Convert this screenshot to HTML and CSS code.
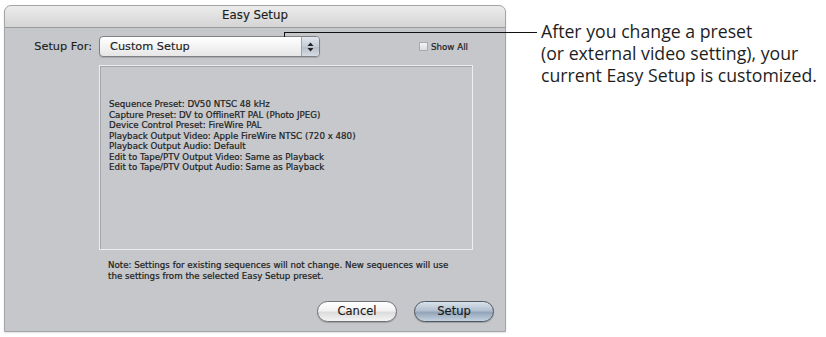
FILE: index.html
```html
<!DOCTYPE html>
<html>
<head>
<meta charset="utf-8">
<link rel="stylesheet" href="styles.css">
</head>
<body>
<div class="page">
  <div class="window">
    <div class="titlebar">Easy Setup</div>
    <div class="content">
      <div class="setup-row">
        <div class="label">Setup For:</div>
        <div class="popup">
          <span class="popup-text">Custom Setup</span>
          <span class="stepper">
            <svg width="7" height="10" viewBox="0 0 7 10"><path d="M3.5 0.5 L6.5 4 L0.5 4 Z" fill="#222"/><path d="M3.5 9.5 L6.5 6 L0.5 6 Z" fill="#222"/></svg>
          </span>
        </div>
        <div class="showall"><span class="check"></span><span>Show All</span></div>
      </div>
      <div class="group">
        <div>Sequence Preset: DV50 NTSC 48 kHz</div>
        <div>Capture Preset: DV to OfflineRT PAL (Photo JPEG)</div>
        <div>Device Control Preset: FireWire PAL</div>
        <div>Playback Output Video: Apple FireWire NTSC (720 x 480)</div>
        <div>Playback Output Audio: Default</div>
        <div>Edit to Tape/PTV Output Video: Same as Playback</div>
        <div>Edit to Tape/PTV Output Audio: Same as Playback</div>
      </div>
      <div class="note">Note: Settings for existing sequences will not change. New sequences will use<br>the settings from the selected Easy Setup preset.</div>
      <div class="buttons">
        <div class="btn">Cancel</div>
        <div class="btn default">Setup</div>
      </div>
    </div>
  </div>
  <div class="callout">After you change a preset<br>(or external video setting), your<br>current Easy Setup is customized.</div>
  <div class="leader-h"></div>
  <div class="leader-v"></div>
</div>
</body>
</html>
```

FILE: styles.css
```css
html, body {
  margin: 0;
  padding: 0;
  background: #ffffff;
}
.page {
  position: relative;
  display: flex;
  align-items: flex-start;
  padding: 5px 0 0 4px;
  width: 826px;
  height: 337px;
  box-sizing: border-box;
}
.window {
  width: 502px;
  height: 327px;
  box-sizing: border-box;
  border: 1px solid #a2a4a7;
  border-radius: 7px 7px 0 0;
  background: #c5c7ca;
  overflow: hidden;
  box-shadow: 0 1px 2px rgba(0,0,0,0.12);
}
.titlebar {
  height: 21px;
  line-height: 18px;
  text-align: center;
  font-family: "DejaVu Sans", sans-serif;
  font-size: 11.8px;
  color: #1c1c1c;
  background: linear-gradient(#ececec, #d4d4d4);
  border-bottom: 1px solid #9c9c9c;
  -webkit-text-stroke: 0.15px #1c1c1c;
}
.content {
  padding: 8px 0 0 0;
  font-family: "DejaVu Sans", sans-serif;
  color: #1d1d1d;
}
.setup-row {
  display: flex;
  align-items: center;
  height: 21px;
}
.label {
  width: 94px;
  text-align: right;
  font-size: 11.3px;
  padding-right: 7px;
  box-sizing: border-box;
  -webkit-text-stroke: 0.15px #1d1d1d;
}
.popup {
  width: 221px;
  height: 21px;
  box-sizing: border-box;
  border: 1px solid #7e8083;
  border-radius: 4px;
  background: linear-gradient(#ffffff, #f3f3f3 50%, #e6e6e6);
  display: flex;
  align-items: center;
  overflow: hidden;
  box-shadow: 0 1px 1px rgba(0,0,0,0.15);
}
.popup-text {
  flex: 1;
  font-size: 11.3px;
  padding-left: 10px;
  -webkit-text-stroke: 0.15px #1d1d1d;
}
.stepper {
  width: 17px;
  height: 100%;
  border-left: 1px solid #9ea3aa;
  background: linear-gradient(#e3e8ef, #c4ccd6 50%, #b5bec9 51%, #d5dbe2);
  display: flex;
  align-items: center;
  justify-content: center;
}
.showall {
  margin-left: 99px;
  display: flex;
  align-items: center;
  gap: 3px;
  font-size: 8.7px;
  -webkit-text-stroke: 0.2px #202020;
}
.check {
  width: 7px;
  height: 7px;
  border: 1px solid #a8abae;
  background: linear-gradient(#f4f4f4, #dcdcdc);
}
.group {
  margin: 8px 0 0 94px;
  width: 374px;
  height: 185px;
  box-sizing: border-box;
  border: 1px solid #eceeef;
  box-shadow: inset 1px 1px 0 #a3a5a8;
  background: #c6c8cb;
  padding: 33px 0 0 9px;
  font-size: 8.7px;
  line-height: 10.5px;
  color: #202020;
  -webkit-text-stroke: 0.2px #202020;
}
.note {
  margin: 10px 0 0 103px;
  font-size: 8.7px;
  line-height: 11px;
  color: #202020;
  -webkit-text-stroke: 0.2px #202020;
}
.buttons {
  display: flex;
  justify-content: flex-end;
  gap: 17px;
  margin: 19px 11px 0 0;
}
.btn {
  width: 80px;
  height: 21px;
  box-sizing: border-box;
  border: 1px solid #6f7173;
  border-radius: 11px;
  background: linear-gradient(#ffffff, #f2f2f2 45%, #dcdcdc 55%, #f4f4f4);
  font-size: 11.5px;
  line-height: 19px;
  text-align: center;
  color: #1a1a1a;
  box-shadow: 0 1px 1px rgba(0,0,0,0.2);
  -webkit-text-stroke: 0.15px #1a1a1a;
}
.btn.default {
  border-color: #4f5762;
  background: linear-gradient(#d9e2ec, #b2c0cf 45%, #93a5b8 55%, #c4d2e0);
}
.callout {
  margin: 15px 0 0 35px;
  font-family: "Open Sans", sans-serif;
  font-size: 17.7px;
  line-height: 22px;
  color: #1e1e1e;
  white-space: nowrap;
}
.leader-h {
  position: absolute;
  left: 284px;
  top: 32px;
  width: 253px;
  height: 1px;
  background: #111;
}
.leader-v {
  position: absolute;
  left: 284px;
  top: 32px;
  width: 1px;
  height: 5px;
  background: #111;
}
```
